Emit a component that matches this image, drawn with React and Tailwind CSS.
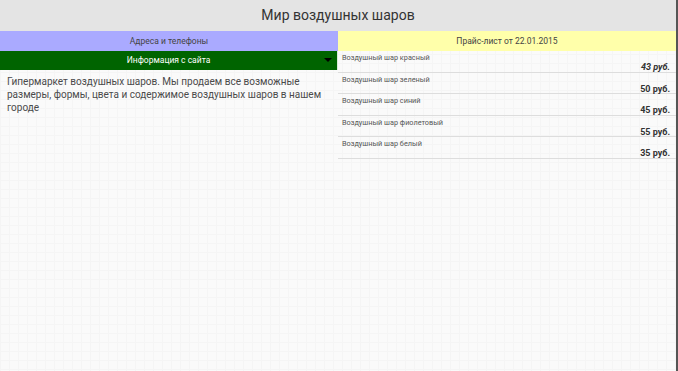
import React from "react";

const prices = [
  { name: "Воздушный шар красный", price: "43 руб.", italic: true },
  { name: "Воздушный шар зеленый", price: "50 руб." },
  { name: "Воздушный шар синий", price: "45 руб." },
  { name: "Воздушный шар фиолетовый", price: "55 руб." },
  { name: "Воздушный шар белый", price: "35 руб." },
];

const App = () => {
  return (
    <div className="flex w-[678px] h-[371px] overflow-hidden font-['Roboto',sans-serif]">
      <div className="flex flex-col flex-1 bg-[#fafafa] bg-[linear-gradient(#f5f5f5_1px,transparent_1px),linear-gradient(90deg,#f5f5f5_1px,transparent_1px)] bg-size-[9px_9px]">
        <header className="h-[31px] bg-[#e4e4e4] flex items-center justify-center text-[14px] text-[#333]">
          Мир воздушных шаров
        </header>

        <div className="flex flex-1">
          {/* left column */}
          <div className="w-[338px] flex flex-col">
            <div className="h-[20px] bg-[#aaaaff] flex items-center justify-center text-[8.5px] text-[#444]">
              Адреса и телефоны
            </div>
            <div className="relative h-[19px] bg-[#006400] flex items-center justify-center text-[8.5px] text-white border-r border-[#d8ecd8]">
              Информация с сайта
              <span className="absolute right-[5px] top-[7px] w-0 h-0 border-l-[4px] border-r-[4px] border-t-[4px] border-l-transparent border-r-transparent border-t-black" />
            </div>
            <p className="px-[7px] pt-[5px] text-[10px] leading-[13px] text-[#4a4a4a]">
              Гипермаркет воздушных шаров. Мы продаем все возможные размеры,
              формы, цвета и содержимое воздушных шаров в нашем городе
            </p>
          </div>

          {/* right column */}
          <div className="flex-1 flex flex-col">
            <div className="h-[20px] bg-[#ffffaa] flex items-center justify-center text-[8.5px] text-[#444]">
              Прайс-лист от 22.01.2015
            </div>
            {prices.map((item) => (
              <div
                key={item.name}
                className="h-[21.5px] flex flex-col px-[4px] border-b border-[#dddddd]"
              >
                <span className="text-[7.3px] leading-[9px] pt-[2px] text-[#555]">
                  {item.name}
                </span>
                <span
                  className={
                    "text-right text-[9px] leading-[10px] font-bold text-[#333] pr-[2px] " +
                    (item.italic ? "italic" : "")
                  }
                >
                  {item.price}
                </span>
              </div>
            ))}
          </div>
        </div>
      </div>
      <div className="w-[2px] bg-[#555]" />
    </div>
  );
};

export default App;
